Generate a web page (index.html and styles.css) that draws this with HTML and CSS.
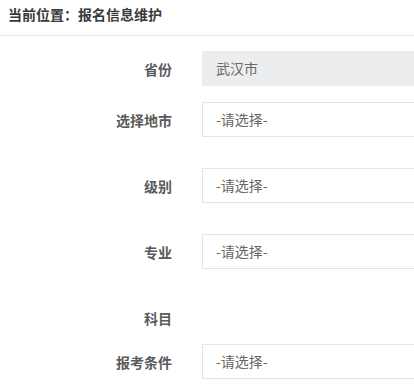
FILE: index.html
```html
<!DOCTYPE html>
<html lang="zh-CN">
<head>
<meta charset="utf-8">
<title>报名信息维护</title>
<link rel="stylesheet" href="styles.css">
</head>
<body>
<div class="crumb">当前位置：报名信息维护</div>
<form class="form">
  <div class="row r1">
    <label class="label">省份</label>
    <div class="field disabled">武汉市</div>
  </div>
  <div class="row r2">
    <label class="label">选择地市</label>
    <div class="field">-请选择-</div>
  </div>
  <div class="row r3">
    <label class="label">级别</label>
    <div class="field">-请选择-</div>
  </div>
  <div class="row r3">
    <label class="label">专业</label>
    <div class="field">-请选择-</div>
  </div>
  <div class="row r3">
    <label class="label">科目</label>
  </div>
  <div class="row r6">
    <label class="label">报考条件</label>
    <div class="field">-请选择-</div>
  </div>
</form>
</body>
</html>
```
FILE: styles.css
```css
html, body {
  margin: 0;
  padding: 0;
  background: #fff;
}
body {
  font-family: "Noto Sans CJK SC", "Liberation Sans", sans-serif;
  font-size: 14px;
  color: #555;
}
.crumb {
  height: 35px;
  line-height: 29px;
  padding-left: 8px;
  font-weight: 700;
  color: #3a3a3a;
  border-bottom: 1px solid #e8e8e8;
  white-space: nowrap;
}
.form {
  display: flex;
  flex-direction: column;
  margin: 0;
  padding-top: 15px;
}
.row {
  display: flex;
  align-items: center;
  height: 35px;
  gap: 30px;
}
.r2 { margin-top: 16px; }
.r3 { margin-top: 31px; }
.r6 { margin-top: 9px; }
.label {
  width: 172px;
  flex: none;
  text-align: right;
  font-weight: 700;
  color: #5a5a5a;
  white-space: nowrap;
}
.field {
  flex: 1;
  min-width: 0;
  box-sizing: border-box;
  height: 35px;
  line-height: 33px;
  padding-left: 13px;
  border: 1px solid #e4e4e4;
  border-right: 0;
  color: #666;
  white-space: nowrap;
}
.field.disabled {
  background: #ebedef;
  border-color: #ebedef;
  color: #6a6a6a;
}
```
